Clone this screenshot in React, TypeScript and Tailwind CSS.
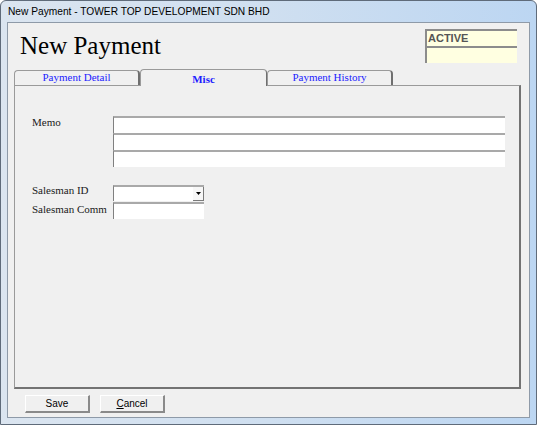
import React from 'react';

const serif = { fontFamily: '"Liberation Serif", "Times New Roman", serif' };
const sans = { fontFamily: '"Liberation Sans", Arial, sans-serif' };

function Tab({ label, active, width }: { label: string; active?: boolean; width: number }) {
    if (active) {
        return (
            <div
                className="relative z-10 -mb-px h-[17px] border border-b-0 border-l-[#9a9a9a] border-t-[#9a9a9a] border-r-[#6f6f6f] rounded-t-[4px] bg-[#f0f0f0] flex items-center justify-center pt-[3px] text-[11px] font-bold text-[#1c1cff]"
                style={{ ...serif, width }}
            >
                {label}
            </div>
        );
    }
    return (
        <div
            className="h-[15px] border border-b-0 border-l-[#9a9a9a] border-t-[#9a9a9a] border-r-[#6f6f6f] border-r-2 rounded-t-[4px] bg-[#f0f0f0] flex items-center justify-center pb-[1px] text-[11px] text-[#1c1cff]"
            style={{ ...serif, width }}
        >
            {label}
        </div>
    );
}

function TextRow() {
    return <div className="h-[17px] bg-white border-t-2 border-t-[#a9a9a9] border-l border-l-[#808080]"></div>;
}

function Button({ children }: { children: React.ReactNode }) {
    return (
        <button
            className="w-[65px] h-[18px] bg-[#f0f0f0] border-t border-l border-t-white border-l-white border-r-2 border-b-2 border-r-[#8a8a8a] border-b-[#8a8a8a] text-[10px] text-black flex items-center justify-center"
            style={sans}
        >
            {children}
        </button>
    );
}

export default function App() {
    return (
        <div className="w-[537px] h-[425px] flex flex-col border border-[#5f6b7a] rounded-t-[6px] bg-gradient-to-r from-[#dbe5f0] via-[#cfdff0] to-[#bcd6f2] overflow-hidden">
            {/* title bar */}
            <div className="h-[21px] flex items-center pl-[7px] text-[10.2px] text-black" style={sans}>
                New Payment - TOWER TOP DEVELOPMENT SDN BHD
            </div>

            {/* client area */}
            <div className="flex-1 mx-[6px] mb-[6px] bg-[#f0f0f0] border border-[#8e9aa8] flex flex-col">
                {/* header */}
                <div className="h-[45px] flex justify-between items-start pl-[12px] pr-[12px] pt-[6px]">
                    <h1 className="text-[25px] leading-none mt-[4px] text-black" style={serif}>New Payment</h1>
                    <div className="w-[92px] flex flex-col" style={sans}>
                        <div className="h-[17px] bg-[#ffffe1] border-t-2 border-l-2 border-[#8c8c8c] flex items-center pl-[1px] text-[11px] font-bold text-[#555555]">
                            ACTIVE
                        </div>
                        <div className="h-[17px] bg-[#ffffe1] border-t-2 border-l-2 border-[#8c8c8c]"></div>
                    </div>
                </div>

                {/* tabs */}
                <div className="flex items-end pl-[6px] h-[17px]">
                    <Tab label="Payment Detail" width={126} />
                    <Tab label="Misc" active width={127} />
                    <Tab label="Payment History" width={126} />
                </div>

                {/* tab panel */}
                <div className="ml-[6px] w-[507px] h-[304px] border-t border-l border-[#9a9a9a] border-r-2 border-b-2 border-r-[#737373] border-b-[#737373] pt-[30px] pl-[17px]" style={serif}>
                    <div className="flex">
                        <div className="w-[81px] text-[11px] leading-[11px] text-[#1a1a1a] pt-[1px]">Memo</div>
                        <div className="w-[392px] flex flex-col">
                            <TextRow />
                            <TextRow />
                            <TextRow />
                        </div>
                    </div>

                    <div className="flex mt-[18px] items-start">
                        <div className="w-[81px] text-[11px] leading-[11px] text-[#1a1a1a] pt-[0px]">Salesman ID</div>
                        <div className="w-[91px] h-[16px] bg-white border-t-2 border-t-[#a9a9a9] border-l border-l-[#808080] flex justify-end">
                            <div className="w-[11px] h-[14px] bg-[#f7f7f7] border-r border-b border-[#7a7a7a] flex items-center justify-center">
                                <svg width="5" height="3" viewBox="0 0 5 3">
                                    <path d="M0 0 L5 0 L2.5 3 Z" fill="#000" />
                                </svg>
                            </div>
                        </div>
                    </div>

                    <div className="flex mt-[1px] items-start">
                        <div className="w-[81px] text-[11px] leading-[11px] text-[#1a1a1a] pt-[2px]">Salesman Comm</div>
                        <div className="w-[91px] h-[17px] bg-white border-t-2 border-t-[#a9a9a9] border-l border-l-[#808080]"></div>
                    </div>
                </div>

                {/* buttons */}
                <div className="flex gap-[10px] pl-[17px] pt-[6px]">
                    <Button>Save</Button>
                    <Button><span><span className="underline">C</span>ancel</span></Button>
                </div>
            </div>
        </div>
    );
}
